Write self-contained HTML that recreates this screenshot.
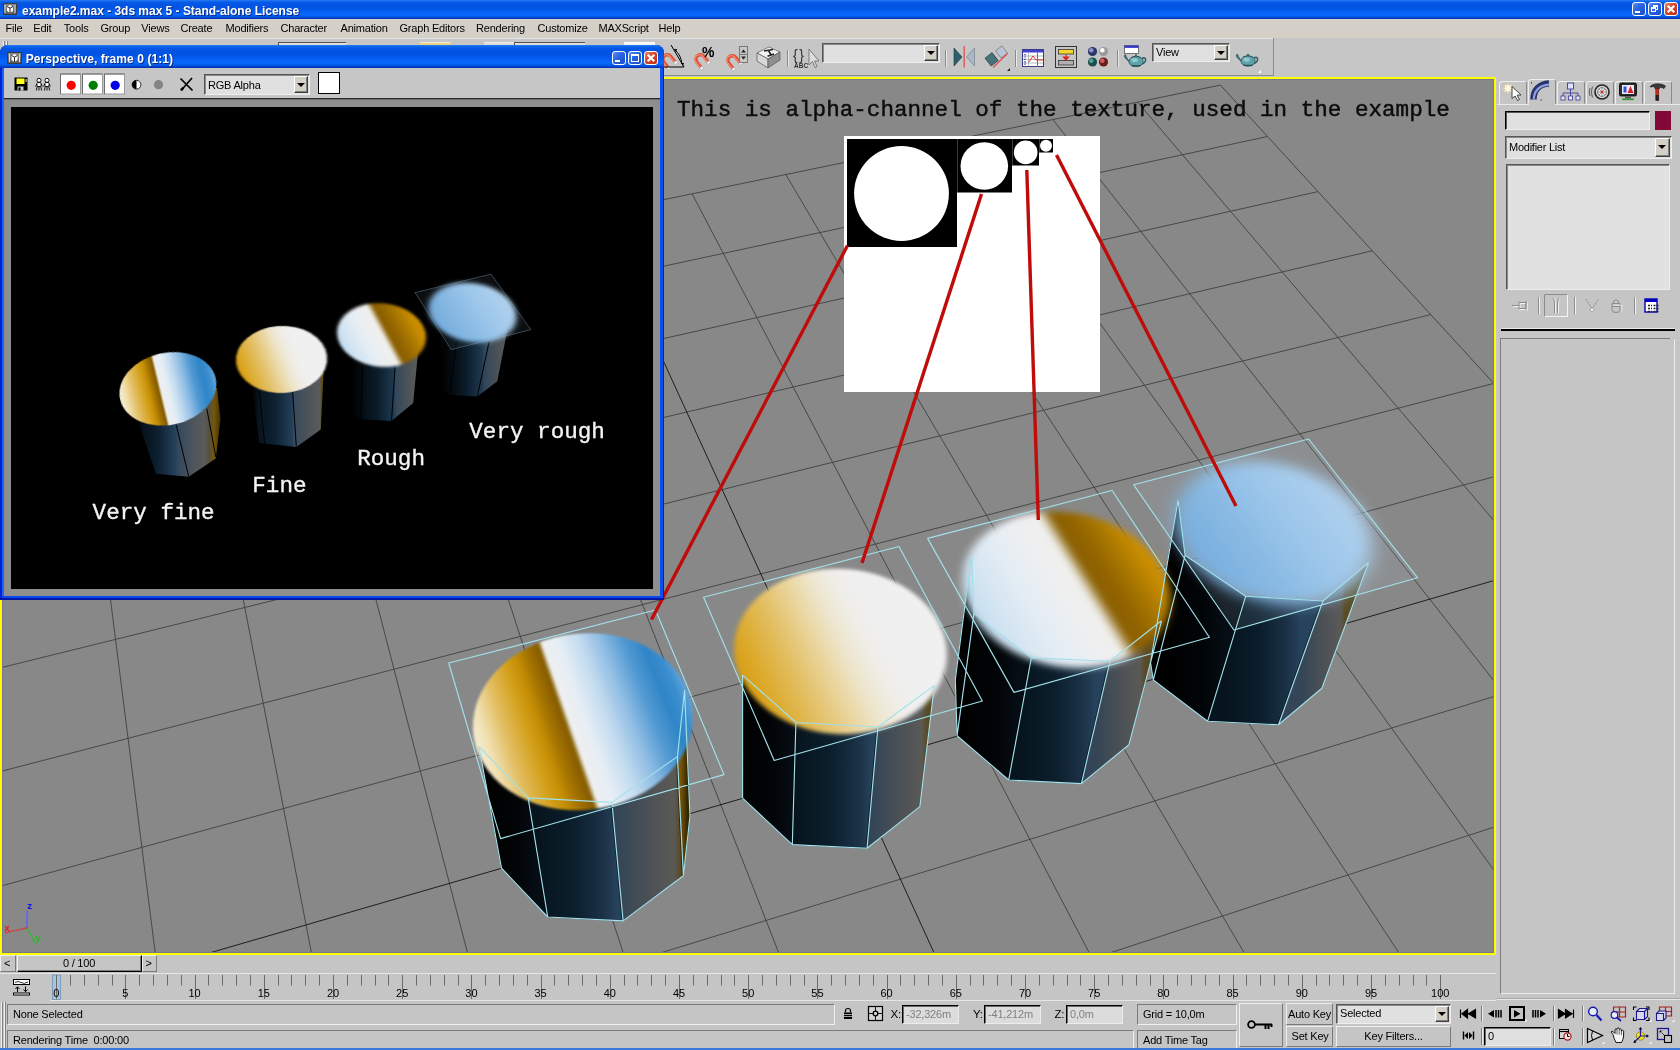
<!DOCTYPE html>
<html><head><meta charset="utf-8"><title>example2.max - 3ds max 5</title>
<style>

*{box-sizing:border-box;margin:0;padding:0}
html,body{width:1680px;height:1050px;overflow:hidden;background:#c5c5c5}
body{font-family:"Liberation Sans",sans-serif;font-size:11px;color:#000}
#root{will-change:transform;position:absolute;left:0;top:0;width:1680px;height:1050px;overflow:hidden;background:#c5c5c5}
.a{position:absolute}
.t{position:absolute;white-space:nowrap;line-height:1;letter-spacing:-0.2px}
.sunk{position:absolute;background:#e0e0e0;border:1px solid;border-color:#555 #eee #eee #555;box-shadow:inset 1px 1px 0 #8a8a8a}
.sunk2{position:absolute;background:#c5c5c5;border:1px solid;border-color:#7b7b7b #f0f0f0 #f0f0f0 #7b7b7b}
.btn{position:absolute;background:#c5c5c5;border:1px solid;border-color:#efefef #7a7a7a #7a7a7a #efefef}
.vsep{position:absolute;width:2px;border-left:1px solid #808080;border-right:1px solid #e8e8e8}
.dd{position:absolute;background:#d4d0c8;border:1px solid;border-color:#fff #404040 #404040 #fff;box-shadow:inset -1px -1px 0 #808080}
.dd:after{content:"";position:absolute;left:50%;top:50%;margin:-2px 0 0 -4px;border:4px solid transparent;border-top:4px solid #000;border-bottom:none}
.mono{font-family:"Liberation Mono",monospace;letter-spacing:0}

</style></head><body>
<div id="root">
<div class="a" style="left:0;top:0;width:1680px;height:19px;background:linear-gradient(#2a7cf0 0%,#1068ee 6%,#0456e4 16%,#0352e2 42%,#0660f4 62%,#0868fc 78%,#0558e8 88%,#0340c8 95%,#022ea8 100%)"></div>
<div class="a" style="left:3px;top:3px;width:14px;height:12px;background:linear-gradient(#8a8a8a,#5a5a5a);border:1px solid #3c3c3c"><svg class="a" style="left:0;top:0" width="12" height="10" viewBox="0 0 12 10"><path d="M3 2.5L6 1L9 2.5V7L6 9L3 7Z" fill="#fff"/><path d="M3 2.5L6 4.2L9 2.5M6 4.2V9" stroke="#222" stroke-width="1" fill="none"/><path d="M1 1v8M11 1v8" stroke="#ddd" stroke-width="1"/></svg></div>
<div class="t" id="ttl" style="left:22px;top:4.5px;font-size:12px;font-weight:bold;color:#fff;letter-spacing:-0.02px;text-shadow:1px 1px 0 #0a2a8a">example2.max - 3ds max 5 - Stand-alone License</div>
<div class="a" style="left:1632px;top:2px;width:14px;height:14px;border:1px solid #fff;border-radius:3px;background:linear-gradient(135deg,#5b8ff5 0%,#2a62e0 45%,#1c4ec8 100%)"><div class="a" style="left:2px;bottom:2px;width:5px;height:2px;background:#fff"></div></div>
<div class="a" style="left:1648px;top:2px;width:14px;height:14px;border:1px solid #fff;border-radius:3px;background:linear-gradient(135deg,#5b8ff5 0%,#2a62e0 45%,#1c4ec8 100%)"><div class="a" style="left:4px;top:2px;width:5px;height:5px;border:1px solid #fff;border-top:2px solid #fff"></div><div class="a" style="left:2px;top:4px;width:5px;height:5px;border:1px solid #fff;border-top:2px solid #fff;background:#2a62e0"></div></div>
<div class="a" style="left:1664px;top:2px;width:14px;height:14px;border:1px solid #fff;border-radius:3px;background:linear-gradient(135deg,#e8846a 0%,#d6452a 45%,#c02c14 100%)"><svg class="a" style="left:0;top:0" width="12" height="12" viewBox="0 0 11 11"><path d="M2.5 2.5L8.5 8.5M8.5 2.5L2.5 8.5" stroke="#fff" stroke-width="2"/></svg></div>
<div class="a" style="left:0;top:19px;width:1680px;height:19px;background:#d4d0c8"></div>
<div class="t mn" style="left:5.5px;top:22.5px;font-size:11px;letter-spacing:-0.2px">File</div>
<div class="t mn" style="left:33.3px;top:22.5px;font-size:11px;letter-spacing:-0.2px">Edit</div>
<div class="t mn" style="left:63.8px;top:22.5px;font-size:11px;letter-spacing:-0.2px">Tools</div>
<div class="t mn" style="left:100.5px;top:22.5px;font-size:11px;letter-spacing:-0.2px">Group</div>
<div class="t mn" style="left:141.3px;top:22.5px;font-size:11px;letter-spacing:-0.2px">Views</div>
<div class="t mn" style="left:180.5px;top:22.5px;font-size:11px;letter-spacing:-0.2px">Create</div>
<div class="t mn" style="left:225.5px;top:22.5px;font-size:11px;letter-spacing:-0.2px">Modifiers</div>
<div class="t mn" style="left:280.5px;top:22.5px;font-size:11px;letter-spacing:-0.2px">Character</div>
<div class="t mn" style="left:340.5px;top:22.5px;font-size:11px;letter-spacing:-0.2px">Animation</div>
<div class="t mn" style="left:399.5px;top:22.5px;font-size:11px;letter-spacing:-0.2px">Graph Editors</div>
<div class="t mn" style="left:476px;top:22.5px;font-size:11px;letter-spacing:-0.2px">Rendering</div>
<div class="t mn" style="left:537.5px;top:22.5px;font-size:11px;letter-spacing:-0.2px">Customize</div>
<div class="t mn" style="left:598.5px;top:22.5px;font-size:11px;letter-spacing:-0.2px">MAXScript</div>
<div class="t mn" style="left:658.5px;top:22.5px;font-size:11px;letter-spacing:-0.2px">Help</div>
<div class="a" style="left:0;top:38px;width:1680px;height:39px;background:#c6c6c6"></div>
<div class="a" style="left:0;top:38px;width:1274px;height:1px;background:#e4e4e4"></div>
<div class="a" style="left:1273px;top:38px;width:1px;height:38px;background:#8c8c8c"></div>
<div class="a" style="left:0;top:75px;width:1274px;height:1px;background:#8c8c8c"></div>
<div class="a" style="left:3px;top:41px;width:1px;height:34px;background:#f0f0f0"></div><div class="a" style="left:4px;top:41px;width:1px;height:34px;background:#808080"></div><div class="a" style="left:6px;top:41px;width:1px;height:34px;background:#f0f0f0"></div><div class="a" style="left:7px;top:41px;width:1px;height:34px;background:#808080"></div>
<div class="a" style="left:278px;top:42px;width:68px;height:4px;background:#e0e0e0;border-top:1px solid #555;border-left:1px solid #555"></div>
<div class="a" style="left:420px;top:42px;width:31px;height:4px;background:#ecd27a;border-top:1px solid #e8e8e8"></div>
<div class="a" style="left:484px;top:42px;width:30px;height:4px;background:#dcdcdc;border-top:1px solid #ececec"></div>
<div class="a" style="left:514px;top:42px;width:71px;height:4px;background:#e0e0e0;border-top:1px solid #555;border-left:1px solid #555"></div>
<div class="a" style="left:624px;top:42px;width:31px;height:4px;background:#f4f4f4;border-top:1px solid #fff"></div>
<svg class="a" style="left:640px;top:38px" width="640" height="39" viewBox="640 38 640 39"><g transform="translate(668,60) rotate(-38)"><path d="M-4.5 6V-1A4.5 4.5 0 0 1 4.5 -1V6" fill="none" stroke="#e05438" stroke-width="3.4"/><path d="M-4.5 6V-1A4.5 4.5 0 0 1 4.5 -1V6" fill="none" stroke="#f59a80" stroke-width="1" transform="translate(-0.8,-0.6)"/><rect x="-6.2" y="5.5" width="3.4" height="2.6" fill="#f4f4f4" stroke="#999" stroke-width="0.5"/><rect x="2.8" y="5.5" width="3.4" height="2.6" fill="#f4f4f4" stroke="#999" stroke-width="0.5"/></g><path d="M671 45L684 67H664" fill="none" stroke="#000" stroke-width="1"/><path d="M675 50Q681 55 682 64" fill="none" stroke="#000" stroke-width="1"/><path d="M674 49l3 0l-1 3zM683 66l-2-3l3 0z" fill="#000"/><g transform="translate(701,60) rotate(-38)"><path d="M-4.5 6V-1A4.5 4.5 0 0 1 4.5 -1V6" fill="none" stroke="#e05438" stroke-width="3.4"/><path d="M-4.5 6V-1A4.5 4.5 0 0 1 4.5 -1V6" fill="none" stroke="#f59a80" stroke-width="1" transform="translate(-0.8,-0.6)"/><rect x="-6.2" y="5.5" width="3.4" height="2.6" fill="#f4f4f4" stroke="#999" stroke-width="0.5"/><rect x="2.8" y="5.5" width="3.4" height="2.6" fill="#f4f4f4" stroke="#999" stroke-width="0.5"/></g><text x="702" y="56.5" font-family="Liberation Sans" font-size="14" font-weight="bold" fill="#000">%</text><g transform="translate(733,61) rotate(-38)"><path d="M-4.5 6V-1A4.5 4.5 0 0 1 4.5 -1V6" fill="none" stroke="#e05438" stroke-width="3.4"/><path d="M-4.5 6V-1A4.5 4.5 0 0 1 4.5 -1V6" fill="none" stroke="#f59a80" stroke-width="1" transform="translate(-0.8,-0.6)"/><rect x="-6.2" y="5.5" width="3.4" height="2.6" fill="#f4f4f4" stroke="#999" stroke-width="0.5"/><rect x="2.8" y="5.5" width="3.4" height="2.6" fill="#f4f4f4" stroke="#999" stroke-width="0.5"/></g><rect x="739.5" y="46.5" width="8" height="16" fill="#c8c8c8" stroke="#777" stroke-width="1"/><path d="M739.5 54.5h8" stroke="#777"/><path d="M741 52.5l2.5-3l2.5 3zM741 56.5l2.5 3l2.5-3z" fill="#222"/><path d="M757 53L769 47L780 52L768 59Z" fill="#f2f2f2" stroke="#555" stroke-width="0.7"/><path d="M757 53V61L768 68V59Z" fill="#d8d8d8" stroke="#555" stroke-width="0.7"/><path d="M768 59V68L780 60V52Z" fill="#8e8e8e" stroke="#555" stroke-width="0.7"/><path d="M764 51L773 49.5M768.5 50.3L771 55M767.5 56.3L774 54" stroke="#222" stroke-width="1.6"/><path d="M787.5 50V67" stroke="#8a8a8a"/><path d="M788.5 50V67" stroke="#e8e8e8"/><text x="793" y="59.5" font-family="Liberation Sans" font-size="14" letter-spacing="1.5" fill="#333">{}</text><text x="794" y="68" font-family="Liberation Sans" font-size="6.5" font-weight="bold" fill="#333">ABC</text><path d="M809 49V65L812.5 61.5L815 67.5L817 66.5L814.5 61L819 61Z" fill="#dcdcdc" stroke="#666" stroke-width="0.8"/><path d="M945.5 50V67" stroke="#8a8a8a"/><path d="M946.5 50V67" stroke="#e8e8e8"/><path d="M954 48L962 57L954 66Z" fill="#2f5f68" stroke="#16363c" stroke-width="0.6"/><path d="M974.5 48L966.5 57L974.5 66Z" fill="#a9b7c6" stroke="#6b7a8a" stroke-width="0.6"/><path d="M964.2 46V67.5" stroke="#d85a5a" stroke-width="1.4"/><g transform="translate(992,59) rotate(-38)"><rect x="-5" y="-5" width="9" height="10" fill="#46727a" stroke="#234" stroke-width="0.6"/></g><g transform="translate(1001.5,52) rotate(-38)"><rect x="-4" y="-4.5" width="8" height="9" fill="#b9c6d6" stroke="#667" stroke-width="0.6"/></g><path d="M993 67.5L1007.5 53.5" stroke="#e05050" stroke-width="1.3"/><path d="M1010 68l-3 3h3z" fill="#222"/><path d="M1010 68l-3 3h3z" fill="#fff" transform="translate(1,1)" opacity="0"/><path d="M1015.5 50V67" stroke="#8a8a8a"/><path d="M1016.5 50V67" stroke="#e8e8e8"/><rect x="1022.5" y="49.5" width="21" height="17" fill="#fff" stroke="#3a3a8a" stroke-width="1"/><rect x="1023" y="50" width="20" height="2.5" fill="#4040d0"/><path d="M1023 56h20M1023 59.5h20M1023 63h20M1028.5 52.5v14M1037.5 52.5v14" stroke="#999" stroke-width="0.7"/><path d="M1025 54v12" stroke="#33a" stroke-width="1.4" stroke-dasharray="1.2 1.2"/><path d="M1037.5 52.5v14" stroke="#2a2" stroke-width="1"/><path d="M1029 62L1033 56L1036 60h7" stroke="#d33" stroke-width="1" fill="none"/><rect x="1055.5" y="46.5" width="21" height="21" fill="#c6c6c6" stroke="#333" stroke-width="1"/><rect x="1058.5" y="49.5" width="15" height="4.5" fill="#f5d72a" stroke="#333" stroke-width="0.8"/><rect x="1058.5" y="60.5" width="15" height="4.5" fill="#b0b0b0" stroke="#333" stroke-width="0.8"/><path d="M1066 54.5v3M1063.5 57h5l-2.5 3z" stroke="#d22" stroke-width="1.2" fill="#d22"/><circle cx="1092.5" cy="51.5" r="4.6" fill="#2e3666"/><circle cx="1091.3" cy="50.2" r="2.3" fill="#8b93c8"/><circle cx="1103.5" cy="51.5" r="4.6" fill="#9a9a9a"/><circle cx="1102.3" cy="50.2" r="2.3" fill="#ffffff"/><circle cx="1092.5" cy="62" r="4.6" fill="#1c4f4a"/><circle cx="1091.3" cy="60.7" r="2.3" fill="#4fa39a"/><circle cx="1103.5" cy="62" r="4.6" fill="#6a1f1f"/><circle cx="1102.3" cy="60.7" r="2.3" fill="#d06060"/><path d="M1117.5 50V67" stroke="#8a8a8a"/><path d="M1118.5 50V67" stroke="#e8e8e8"/><rect x="1124.5" y="45.5" width="14" height="8" fill="#fff" stroke="#555" stroke-width="0.8"/><rect x="1124.5" y="45.5" width="14" height="2.4" fill="#3838c8"/><g transform="translate(1136,61.5) scale(0.95)"><path d="M-10 -2C-13 -5 -13 -7 -11 -7C-10 -4 -8 -1 -6 1Z" fill="#3f7f86" stroke="#1d3d42" stroke-width="0.6"/><path d="M6 -3C11 -6 12 0 6 3" fill="none" stroke="#2c5f66" stroke-width="1.6"/><ellipse cx="0" cy="0" rx="7.5" ry="5.5" fill="#5fa3aa" stroke="#1d3d42" stroke-width="0.7"/><ellipse cx="-1.5" cy="-1.5" rx="3.5" ry="2.2" fill="#9fd0d4" opacity="0.8"/><path d="M-5 -4.3Q0 -7 5 -4.3" fill="#4a8f96" stroke="#1d3d42" stroke-width="0.6"/><rect x="-1" y="-7.4" width="2" height="1.6" fill="#2c5f66"/><path d="M-5 4.5H5" stroke="#1d3d42" stroke-width="1"/></g><g transform="translate(1248,61) scale(0.95)"><path d="M-10 -2C-13 -5 -13 -7 -11 -7C-10 -4 -8 -1 -6 1Z" fill="#3f7f86" stroke="#1d3d42" stroke-width="0.6"/><path d="M6 -3C11 -6 12 0 6 3" fill="none" stroke="#2c5f66" stroke-width="1.6"/><ellipse cx="0" cy="0" rx="7.5" ry="5.5" fill="#5fa3aa" stroke="#1d3d42" stroke-width="0.7"/><ellipse cx="-1.5" cy="-1.5" rx="3.5" ry="2.2" fill="#9fd0d4" opacity="0.8"/><path d="M-5 -4.3Q0 -7 5 -4.3" fill="#4a8f96" stroke="#1d3d42" stroke-width="0.6"/><rect x="-1" y="-7.4" width="2" height="1.6" fill="#2c5f66"/><path d="M-5 4.5H5" stroke="#1d3d42" stroke-width="1"/></g><path d="M1261 70l-3 3h3z" fill="#fff"/></svg>
<div class="sunk" style="left:822px;top:43px;width:118px;height:20px"></div><div class="dd" style="left:924px;top:45px;width:14px;height:16px"></div>
<div class="sunk" style="left:1152px;top:43px;width:78px;height:19px"></div><div class="dd" style="left:1214px;top:45px;width:14px;height:15px"></div>
<div class="t" style="left:1156px;top:47px;font-size:11px">View</div>
<div class="a" id="vp" style="left:0px;top:77px;width:1496px;height:878px;background:#888888;overflow:hidden">
<div class="a" style="left:0px;top:-77px;width:1680px;height:1050px">
<svg class="a" style="left:0;top:0" width="1680" height="1050" viewBox="0 0 1680 1050" shape-rendering="auto"><path d="M-154.1 367.9L-168.4 2638.8M-154.1 367.9L1220.4 85.1M-37.8 344.0L92.8 2512.9M-154.5 441.9L1267.5 136.5M75.2 320.7L337.8 2394.8M-155.0 522.4L1318.0 191.6M185.1 298.1L568.2 2283.8M-155.6 610.2L1372.2 250.8M292.1 276.1L785.3 2179.2M-156.2 706.5L1430.7 314.6M396.1 254.7L990.1 2080.6M-156.9 812.4L1493.8 383.4M497.4 233.9L1183.6 1987.3M-157.6 929.5L1562.2 458.0M692.1 193.8L1540.5 1815.3M-159.3 1205.2L1717.7 627.7M785.8 174.5L1705.4 1735.9M-160.4 1369.0L1806.6 724.7M877.1 155.8L1862.1 1660.4M-161.5 1554.9L1904.4 831.4M966.1 137.5L2011.3 1588.5M-162.9 1767.4L2012.6 949.4M1052.9 119.6L2153.4 1520.0M-164.4 2012.9L2132.8 1080.5M1137.7 102.2L2289.0 1454.6M-166.2 2299.6L2267.2 1227.2M1220.4 85.1L2418.5 1392.2M-168.4 2638.8L2418.5 1392.2" stroke="#484848" stroke-width="1" fill="none"/><path d="M596.0 213.6L1366.8 1899.0M-158.4 1059.6L1636.5 539.2" stroke="#0c0c0c" stroke-width="1" fill="none" stroke-opacity="0.85"/></svg>
<svg class="a" style="left:0;top:0" width="1680" height="1050" viewBox="0 0 1680 1050"><defs><linearGradient id="f0_0" gradientUnits="userSpaceOnUse" x1="490.2" y1="807.2" x2="537.9" y2="807.2"><stop offset="0" stop-color="#000000"/><stop offset="0.6" stop-color="#020508"/><stop offset="1" stop-color="#060e15"/></linearGradient><linearGradient id="f0_1" gradientUnits="userSpaceOnUse" x1="537.9" y1="857.5" x2="617.5" y2="857.5"><stop offset="0" stop-color="#07141d"/><stop offset="0.45" stop-color="#0b1e2c"/><stop offset="0.8" stop-color="#1a3044"/><stop offset="1" stop-color="#27425c"/></linearGradient><linearGradient id="f0_2" gradientUnits="userSpaceOnUse" x1="617.5" y1="861.6" x2="680.4" y2="861.6"><stop offset="0" stop-color="#334556"/><stop offset="0.35" stop-color="#454d55"/><stop offset="0.75" stop-color="#555657"/><stop offset="0.9" stop-color="#5a5955"/><stop offset="1" stop-color="#5a4a24"/></linearGradient><linearGradient id="f0_3" gradientUnits="userSpaceOnUse" x1="680.4" y1="816.2" x2="687.3" y2="816.2"><stop offset="0" stop-color="#75560a"/><stop offset="0.5" stop-color="#5a4204"/><stop offset="1" stop-color="#352700"/></linearGradient><linearGradient id="f1_0" gradientUnits="userSpaceOnUse" x1="742.6" y1="736.6" x2="794.1" y2="736.6"><stop offset="0" stop-color="#000000"/><stop offset="0.6" stop-color="#020508"/><stop offset="1" stop-color="#060e15"/></linearGradient><linearGradient id="f1_1" gradientUnits="userSpaceOnUse" x1="794.1" y1="783.5" x2="872.5" y2="783.5"><stop offset="0" stop-color="#07141d"/><stop offset="0.45" stop-color="#0b1e2c"/><stop offset="0.8" stop-color="#1a3044"/><stop offset="1" stop-color="#27425c"/></linearGradient><linearGradient id="f1_2" gradientUnits="userSpaceOnUse" x1="872.5" y1="787.6" x2="927.1" y2="787.6"><stop offset="0" stop-color="#334556"/><stop offset="0.35" stop-color="#454d55"/><stop offset="0.75" stop-color="#555657"/><stop offset="0.9" stop-color="#5a5955"/><stop offset="1" stop-color="#5a4a24"/></linearGradient><linearGradient id="f2_0" gradientUnits="userSpaceOnUse" x1="965.5" y1="674.7" x2="1020.0" y2="674.7"><stop offset="0" stop-color="#000000"/><stop offset="0.6" stop-color="#020508"/><stop offset="1" stop-color="#060e15"/></linearGradient><linearGradient id="f2_1" gradientUnits="userSpaceOnUse" x1="1020.0" y1="719.0" x2="1095.7" y2="719.0"><stop offset="0" stop-color="#07141d"/><stop offset="0.45" stop-color="#0b1e2c"/><stop offset="0.8" stop-color="#1a3044"/><stop offset="1" stop-color="#27425c"/></linearGradient><linearGradient id="f2_2" gradientUnits="userSpaceOnUse" x1="1095.7" y1="722.4" x2="1145.2" y2="722.4"><stop offset="0" stop-color="#334556"/><stop offset="0.35" stop-color="#454d55"/><stop offset="0.75" stop-color="#555657"/><stop offset="0.9" stop-color="#5a5955"/><stop offset="1" stop-color="#5a4a24"/></linearGradient><linearGradient id="f3_0" gradientUnits="userSpaceOnUse" x1="1169.2" y1="617.6" x2="1226.7" y2="617.6"><stop offset="0" stop-color="#000000"/><stop offset="0.6" stop-color="#020508"/><stop offset="1" stop-color="#060e15"/></linearGradient><linearGradient id="f3_1" gradientUnits="userSpaceOnUse" x1="1226.7" y1="658.8" x2="1300.7" y2="658.8"><stop offset="0" stop-color="#07141d"/><stop offset="0.45" stop-color="#0b1e2c"/><stop offset="0.8" stop-color="#1a3044"/><stop offset="1" stop-color="#27425c"/></linearGradient><linearGradient id="f3_2" gradientUnits="userSpaceOnUse" x1="1300.7" y1="662.9" x2="1345.2" y2="662.9"><stop offset="0" stop-color="#334556"/><stop offset="0.35" stop-color="#454d55"/><stop offset="0.75" stop-color="#555657"/><stop offset="0.9" stop-color="#5a5955"/><stop offset="1" stop-color="#5a4a24"/></linearGradient></defs><polygon points="478.9,746.3 528.1,797.9 547.7,917.0 501.5,868.1" fill="url(#f0_0)" stroke="url(#f0_0)" stroke-width="0.7"/><polygon points="528.1,797.9 611.9,802.4 623.1,920.9 547.7,917.0" fill="url(#f0_1)" stroke="url(#f0_1)" stroke-width="0.7"/><polygon points="611.9,802.4 677.4,756.6 683.4,875.7 623.1,920.9" fill="url(#f0_2)" stroke="url(#f0_2)" stroke-width="0.7"/><polygon points="677.4,756.6 684.6,690.1 690.0,816.0 683.4,875.7" fill="url(#f0_3)" stroke="url(#f0_3)" stroke-width="0.7"/><path d="M527.3 797.9L546.9 917.0" stroke="#000" stroke-opacity="0.5" stroke-width="1.4"/><path d="M611.1 802.4L622.3 920.9" stroke="#000" stroke-opacity="0.5" stroke-width="1.4"/><path d="M676.6 756.6L682.6 875.7" stroke="#000" stroke-opacity="0.5" stroke-width="1.4"/><polygon points="742.6,675.1 795.9,722.5 792.3,844.6 742.6,798.1" fill="url(#f1_0)" stroke="url(#f1_0)" stroke-width="0.7"/><polygon points="795.9,722.5 877.9,727.0 867.0,848.2 792.3,844.6" fill="url(#f1_1)" stroke="url(#f1_1)" stroke-width="0.7"/><polygon points="877.9,727.0 934.4,685.4 919.9,806.6 867.0,848.2" fill="url(#f1_2)" stroke="url(#f1_2)" stroke-width="0.7"/><path d="M795.1 722.5L791.5 844.6" stroke="#000" stroke-opacity="0.5" stroke-width="1.4"/><path d="M877.1 727.0L866.2 848.2" stroke="#000" stroke-opacity="0.5" stroke-width="1.4"/><polygon points="971.6,554.2 973.9,613.6 957.1,735.7 955.3,679.6" fill="#000" stroke="#000" stroke-width="0.6"/><polygon points="973.9,613.6 1031.3,657.9 1008.7,780.0 957.1,735.7" fill="url(#f2_0)" stroke="url(#f2_0)" stroke-width="0.7"/><polygon points="1031.3,657.9 1110.0,661.2 1081.4,783.6 1008.7,780.0" fill="url(#f2_1)" stroke="url(#f2_1)" stroke-width="0.7"/><polygon points="1110.0,661.2 1161.5,620.8 1129.0,744.7 1081.4,783.6" fill="url(#f2_2)" stroke="url(#f2_2)" stroke-width="0.7"/><path d="M1030.5 657.9L1007.9 780.0" stroke="#000" stroke-opacity="0.5" stroke-width="1.4"/><path d="M1109.2 661.2L1080.6 783.6" stroke="#000" stroke-opacity="0.5" stroke-width="1.4"/><polygon points="1178.1,500.0 1185.1,555.2 1153.3,680.0 1150.5,662.5" fill="#000" stroke="#000" stroke-width="0.6"/><polygon points="1185.1,555.2 1245.7,596.2 1207.6,721.3 1153.3,680.0" fill="url(#f3_0)" stroke="url(#f3_0)" stroke-width="0.7"/><polygon points="1245.7,596.2 1322.9,601.0 1278.5,724.8 1207.6,721.3" fill="url(#f3_1)" stroke="url(#f3_1)" stroke-width="0.7"/><polygon points="1322.9,601.0 1368.6,562.5 1321.9,688.2 1278.5,724.8" fill="url(#f3_2)" stroke="url(#f3_2)" stroke-width="0.7"/><path d="M1244.9 596.2L1206.8 721.3" stroke="#000" stroke-opacity="0.5" stroke-width="1.4"/><path d="M1322.1 601.0L1277.7 724.8" stroke="#000" stroke-opacity="0.5" stroke-width="1.4"/></svg>
<div class="a" style="left:0;top:0;width:200px;height:200px;transform-origin:0 0;transform:matrix3d(1.1450932,-0.16161806,0,0.00016947859,0.047497281,0.52285521,0,-0.00042349724,0,0,1,0,448.7,663,0,1)"><div class="a" style="left:1.5px;top:1.5px;width:197.0px;height:197.0px;border-radius:50%;background:linear-gradient(to right,#f6efd8 0%,#f1e1b4 6%,#e2bd60 15%,#d4a01a 24.5%,#c48e04 30%,#a07000 36%,#8a5e00 40.5%,#866000 41.5%,#efefef 43.5%,#e6eef5 50.5%,#c4dcf0 60%,#8fbde4 70%,#4f98d2 80%,#2f85c7 88%,#3c8ece 94%,#66a8de 100%);background-size:200px 100%;background-position:-1.5px 0;filter:blur(0.9px)"></div></div>
<div class="a" style="left:0;top:0;width:200px;height:200px;transform-origin:0 0;transform:matrix3d(1.1072949,-0.17429404,0,0.00014493314,0.071844003,0.54031925,0,-0.0003631568,0,0,1,0,703.6,597.2,0,1)"><div class="a" style="left:1.5px;top:1.5px;width:197.0px;height:197.0px;border-radius:50%;background:linear-gradient(to right,#d79c10 0%,#dcaa2c 10%,#e2bd5e 24%,#e9d296 38%,#ede4c8 50%,#efece4 60%,#f0f0f0 70%,#f0f0f0 100%);background-size:200px 100%;background-position:-1.5px 0;filter:blur(2.2px)"></div></div>
<div class="a" style="left:0;top:0;width:200px;height:200px;transform-origin:0 0;transform:matrix3d(1.0572382,-0.18007273,0,0.00012115651,0.088005281,0.53510656,0,-0.00033924528,0,0,1,0,927.6,538.4,0,1)"><div class="a" style="left:1.5px;top:1.5px;width:197.0px;height:197.0px;border-radius:50%;background:linear-gradient(to right,#c2dcf0 0%,#d6e6f2 15%,#e6eef4 32%,#efefef 48%,#f0f0ee 57.5%,#8a5e00 63.5%,#926400 72%,#a87600 82%,#c48a00 92%,#d09000 100%);background-size:200px 100%;background-position:-1.5px 0;filter:blur(4.5px)"></div></div>
<div class="a" style="left:0;top:0;width:200px;height:200px;transform-origin:0 0;transform:matrix3d(1.0295438,-0.176987,0,0.00011848063,0.12194175,0.53246187,0,-0.00030720338,0,0,1,0,1133.7,484.8,0,1)"><div class="a" style="left:0;top:0;width:200px;height:200px;background:radial-gradient(circle at 50% 50%,rgba(150,195,235,0.55) 40%,rgba(170,190,210,0.16) 62%,rgba(170,185,200,0.10) 100%)"></div><div class="a" style="left:5.0px;top:5.0px;width:190.0px;height:190.0px;border-radius:50%;background:linear-gradient(to right,#74abdc 0%,#86b8e2 30%,#9cc6ea 60%,#b2d2ee 100%);background-size:200px 100%;background-position:-5.0px 0;filter:blur(9px)"></div></div>
<svg class="a" style="left:0;top:0" width="1680" height="1050" viewBox="0 0 1680 1050"><path d="M448.7 663.0L655.5 610.0L724.0 774.6L500.6 838.6ZM478.9 746.3L528.1 797.9L611.9 802.4L677.4 756.6L684.6 690.1M501.5 868.1L547.7 917.0L623.1 920.9L683.4 875.7M683.4 875.7L690.0 816.0M478.9 746.3L501.5 868.1M528.1 797.9L547.7 917.0M611.9 802.4L623.1 920.9M677.4 756.6L683.4 875.7M684.6 690.1L690.0 816.0M703.6 597.2L899.0 546.5L982.3 701.0L774.2 760.5ZM742.6 675.1L795.9 722.5L877.9 727.0L934.4 685.4M742.6 798.1L792.3 844.6L867.0 848.2L919.9 806.6M742.6 675.1L742.6 798.1M795.9 722.5L792.3 844.6M877.9 727.0L867.0 848.2M934.4 685.4L919.9 806.6M927.6 538.4L1112.1 490.5L1209.4 637.2L1014.0 692.4ZM971.6 554.2L973.9 613.6M971.6 554.2L955.3 679.6L957.1 735.7M973.9 613.6L1031.3 657.9L1110.0 661.2L1161.5 620.8M957.1 735.7L1008.7 780.0L1081.4 783.6L1129.0 744.7M973.9 613.6L957.1 735.7M1031.3 657.9L1008.7 780.0M1110.0 661.2L1081.4 783.6M1161.5 620.8L1129.0 744.7M1133.7 484.8L1308.6 439.0L1417.5 577.7L1233.9 630.0ZM1178.1 500.0L1185.1 555.2M1178.1 500.0L1150.5 662.5L1153.3 680.0M1185.1 555.2L1245.7 596.2L1322.9 601.0L1368.6 562.5M1153.3 680.0L1207.6 721.3L1278.5 724.8L1321.9 688.2M1185.1 555.2L1153.3 680.0M1245.7 596.2L1207.6 721.3M1322.9 601.0L1278.5 724.8M1368.6 562.5L1321.9 688.2" stroke="#a2e0ea" stroke-width="1.15" fill="none" stroke-linejoin="round"/><rect x="844" y="136" width="256" height="256" fill="#fff"/><rect x="847" y="139" width="110" height="108" fill="#000"/><rect x="957" y="139" width="55" height="53.5" fill="#000"/><rect x="1012" y="139" width="27" height="26.5" fill="#000"/><rect x="1039" y="139" width="14" height="13.5" fill="#000"/><path d="M957.5 139V192M1012.5 139V165M1039.5 139V152" stroke="#3a3a3a" stroke-width="1"/><circle cx="901.5" cy="193.5" r="47.4" fill="#fff"/><circle cx="984.3" cy="166" r="23.8" fill="#fff"/><circle cx="1025.7" cy="152.4" r="11.8" fill="#fff"/><circle cx="1046" cy="145.8" r="6" fill="#fff"/><path d="M847.5 245.5L651.5 619.5" stroke="#c00b0b" stroke-width="3.4"/><path d="M981.5 194L862 563" stroke="#c00b0b" stroke-width="3.4"/><path d="M1026.8 170L1038.3 520" stroke="#c00b0b" stroke-width="3.4"/><path d="M1056.5 155L1236 506" stroke="#c00b0b" stroke-width="3.4"/><path d="M27 928V911" stroke="#6a6ade" stroke-width="2"/><path d="M27 928L4.500 932.700" stroke="#f02828" stroke-width="1.300" stroke-dasharray="2.500 0.800"/><path d="M27 928L35 943" stroke="#30b830" stroke-width="1.400"/><text x="27.300" y="909.300" font-family="Liberation Sans" font-size="9.800" font-weight="bold" fill="#1010f0">z</text><text x="4.300" y="931.300" font-family="Liberation Sans" font-size="9.800" font-weight="bold" fill="#f01818">x</text><text x="35.300" y="941.300" font-family="Liberation Sans" font-size="9.800" font-weight="bold" fill="#18c018">y</text></svg>
<div class="t mono" id="cap" style="left:677px;top:98.9px;font-size:22.6px;color:#0c0c0c;-webkit-text-stroke:0.45px #0c0c0c">This is alpha-channel of the texture, used in the example</div>
</div>
<div class="a" style="left:0;top:0;width:1496px;height:878px;border:2px solid #ffff00;box-shadow:inset 0 0 0 1px #777788"></div>
</div>
<div class="a" id="rw" style="left:0;top:45px;width:664px;height:555px;border-radius:8px 8px 0 0;background:#0b46d8;overflow:hidden;box-shadow:inset 0 0 0 1px #0831b8">
<div class="a" style="left:0;top:0;width:664px;height:23px;background:linear-gradient(#2a7cf0 0%,#1068ee 6%,#0456e4 16%,#0352e2 42%,#0660f4 62%,#0868fc 78%,#0558e8 88%,#0340c8 95%,#022ea8 100%)"></div>
<div class="a" style="left:0;top:23px;width:664px;height:532px;background:#0a50f0"></div>
<div class="a" style="left:0;top:23px;width:2px;height:532px;background:#0420cc"></div><div class="a" style="left:2px;top:23px;width:2px;height:530px;background:#1266fa"></div>
<div class="a" style="left:662.500px;top:23px;width:1.500px;height:532px;background:#0420c4"></div>
<div class="a" style="left:0;top:553px;width:664px;height:2px;background:#0416a8"></div><div class="a" style="left:2px;top:551px;width:660px;height:2px;background:#0848f0"></div>
<div class="a" style="left:4px;top:23px;width:656px;height:528px;background:#8e8e8e"></div>
<div class="a" style="left:4px;top:23px;width:656px;height:30px;background:#c6c6c6"></div>
<div class="a" style="left:4px;top:53px;width:656px;height:1px;background:#2a2a2a"></div>
<div class="a" style="left:4px;top:54px;width:656px;height:1px;background:#6e6e6e"></div>
<div class="a" style="left:11px;top:62px;width:642px;height:482px;background:#000"></div>
</div>
<div class="a" style="left:7px;top:52px;width:15px;height:12px;background:linear-gradient(#8a8a8a,#5a5a5a);border:1px solid #3c3c3c"><svg class="a" style="left:0;top:0" width="13" height="10" viewBox="0 0 12 10"><path d="M3 2.5L6 1L9 2.5V7L6 9L3 7Z" fill="#fff"/><path d="M3 2.5L6 4.2L9 2.5M6 4.2V9" stroke="#222" stroke-width="1" fill="none"/><path d="M1 1v8M11 1v8" stroke="#ddd" stroke-width="1"/></svg></div>
<div class="t" id="rttl" style="left:25.7px;top:53px;font-size:12px;font-weight:bold;color:#fff;letter-spacing:0.08px;text-shadow:1px 1px 0 #0a2a8a">Perspective, frame 0 (1:1)</div>
<div class="a" style="left:612px;top:51px;width:14px;height:14px;border:1px solid #fff;border-radius:3px;background:linear-gradient(135deg,#5b8ff5 0%,#2a62e0 45%,#1c4ec8 100%)"><div class="a" style="left:2px;bottom:2px;width:5px;height:2px;background:#fff"></div></div>
<div class="a" style="left:628px;top:51px;width:14px;height:14px;border:1px solid #fff;border-radius:3px;background:linear-gradient(135deg,#5b8ff5 0%,#2a62e0 45%,#1c4ec8 100%)"><div class="a" style="left:2px;top:2px;width:8px;height:8px;border:1px solid #fff;border-top:2px solid #fff"></div></div>
<div class="a" style="left:644px;top:51px;width:14px;height:14px;border:1px solid #fff;border-radius:3px;background:linear-gradient(135deg,#e8846a 0%,#d6452a 45%,#c02c14 100%)"><svg class="a" style="left:0;top:0" width="12" height="12" viewBox="0 0 11 11"><path d="M2.5 2.5L8.5 8.5M8.5 2.5L2.5 8.5" stroke="#fff" stroke-width="2"/></svg></div>
<svg class="a" style="left:0;top:68px" width="360" height="31" viewBox="0 68 360 31"><rect x="14.5" y="77.5" width="13" height="13" fill="#000"/><rect x="16.5" y="78.5" width="8" height="5.5" fill="#ffff20"/><rect x="17.5" y="86.5" width="6" height="4" fill="#c6c6c6"/><rect x="18.5" y="87.5" width="2" height="3" fill="#000"/><rect x="25.5" y="79" width="1.2" height="3" fill="#c6c6c6"/><circle cx="39" cy="80.3" r="2" fill="#fff" stroke="#000" stroke-width="0.9"/><path d="M35.6 86.5L37.4 82.6H40.6L42.4 86.5M37.2 84V86.5L36.4 90.5M40.8 84V86.5L41.6 90.5M39 86.5V90.5M37.2 86.5H40.8" fill="none" stroke="#000" stroke-width="0.9"/><path d="M37.6 83.2H40.4V86H37.6Z" fill="#fff"/><circle cx="47" cy="80.3" r="2" fill="#fff" stroke="#000" stroke-width="0.9"/><path d="M43.6 86.5L45.4 82.6H48.6L50.4 86.5M45.2 84V86.5L44.4 90.5M48.8 84V86.5L49.6 90.5M47 86.5V90.5M45.2 86.5H48.8" fill="none" stroke="#000" stroke-width="0.9"/><path d="M45.6 83.2H48.4V86H45.6Z" fill="#fff"/><rect x="60.5" y="74" width="20" height="20" fill="#fff" stroke="#9a9a9a" stroke-width="1"/><path d="M60.5 94V74H80.5" fill="none" stroke="#6e6e6e" stroke-width="1"/><circle cx="71.2" cy="85.3" r="4.6" fill="#ff0000"/><rect x="82.5" y="74" width="20" height="20" fill="#fff" stroke="#9a9a9a" stroke-width="1"/><path d="M82.5 94V74H102.5" fill="none" stroke="#6e6e6e" stroke-width="1"/><circle cx="93.2" cy="85.3" r="4.6" fill="#008000"/><rect x="104.5" y="74" width="20" height="20" fill="#fff" stroke="#9a9a9a" stroke-width="1"/><path d="M104.5 94V74H124.5" fill="none" stroke="#6e6e6e" stroke-width="1"/><circle cx="115.2" cy="85.3" r="4.6" fill="#0000e8"/><circle cx="136.5" cy="84.7" r="4.4" fill="#fff"/><path d="M136.5 80.3A4.4 4.4 0 0 0 136.5 89.1Z" fill="#000"/><circle cx="136.5" cy="84.7" r="4.4" fill="none" stroke="#000" stroke-width="0.8"/><circle cx="158.5" cy="84.7" r="4.6" fill="#848484"/><path d="M180.5 78.5L192.5 90.5M192 78L181 90.5" stroke="#000" stroke-width="1.7"/><path d="M181 90.2l2.3-2.3" stroke="#000" stroke-width="2.6"/></svg>
<div class="sunk" style="left:204px;top:74px;width:106px;height:21px"></div><div class="dd" style="left:294px;top:76px;width:14px;height:17px"></div>
<div class="t" style="left:208px;top:80px;font-size:11px">RGB Alpha</div>
<div class="a" style="left:318px;top:72px;width:22px;height:22px;background:#fff;border:1px solid #000"></div>
<svg class="a" style="left:0;top:0" width="664" height="600" viewBox="0 0 664 600"><defs><linearGradient id="mb0" gradientUnits="userSpaceOnUse" x1="137" y1="0" x2="221" y2="0"><stop offset="0" stop-color="#010305"/><stop offset="0.08" stop-color="#07121b"/><stop offset="0.25" stop-color="#0c2030"/><stop offset="0.46" stop-color="#26425c"/><stop offset="0.50" stop-color="#36495c"/><stop offset="0.66" stop-color="#4c545c"/><stop offset="0.80" stop-color="#5a5a5a"/><stop offset="0.86" stop-color="#56503c"/><stop offset="0.92" stop-color="#74560a"/><stop offset="1" stop-color="#3e2e00"/></linearGradient><linearGradient id="mb1" gradientUnits="userSpaceOnUse" x1="236" y1="0" x2="324" y2="0"><stop offset="0" stop-color="#000"/><stop offset="0.18" stop-color="#000"/><stop offset="0.26" stop-color="#08141e"/><stop offset="0.45" stop-color="#0d2232"/><stop offset="0.64" stop-color="#24405a"/><stop offset="0.66" stop-color="#384a5c"/><stop offset="0.85" stop-color="#50555a"/><stop offset="0.95" stop-color="#5a5a5a"/><stop offset="0.975" stop-color="#5a4c20"/><stop offset="1" stop-color="#7a5a08"/></linearGradient><linearGradient id="mb2" gradientUnits="userSpaceOnUse" x1="338" y1="0" x2="419" y2="0"><stop offset="0" stop-color="#000"/><stop offset="0.18" stop-color="#000"/><stop offset="0.3" stop-color="#050c12"/><stop offset="0.5" stop-color="#0b1e2c"/><stop offset="0.69" stop-color="#203a52"/><stop offset="0.71" stop-color="#33475a"/><stop offset="0.88" stop-color="#4e5458"/><stop offset="0.97" stop-color="#5a5a58"/><stop offset="1" stop-color="#5a4a20"/></linearGradient><linearGradient id="mb3" gradientUnits="userSpaceOnUse" x1="426" y1="0" x2="508" y2="0"><stop offset="0" stop-color="#000"/><stop offset="0.17" stop-color="#000"/><stop offset="0.33" stop-color="#050c12"/><stop offset="0.5" stop-color="#0b1e2c"/><stop offset="0.68" stop-color="#1f3950"/><stop offset="0.72" stop-color="#33475a"/><stop offset="0.88" stop-color="#4c5258"/><stop offset="1" stop-color="#5a5a5a"/></linearGradient></defs><polygon points="137,419 156.1,473.8 188.7,476.8 215.8,458.4 220.5,419 217,388 168,382" fill="url(#mb0)"/><path d="M176 424L188.7 476.5" stroke="#000" stroke-width="1"/><path d="M206.8 408.6L215.8 457" stroke="#000" stroke-width="1"/><polygon points="252,388 259.3,443 296.4,447 320.8,429.4 323.5,372 282,355" fill="url(#mb1)"/><path d="M259.2 390.5L264.7 443.9" stroke="#000" stroke-width="1"/><path d="M292.7 392.3L296.3 446.6" stroke="#000" stroke-width="1"/><polygon points="352.6,352 353.5,412.9 360.7,419.2 391.5,421 413.2,403 418.6,346 382,330" fill="url(#mb2)"/><path d="M362.5 365L360.7 419.2" stroke="#000" stroke-width="1"/><path d="M395.1 366.8L391.5 420.7" stroke="#000" stroke-width="1"/><polygon points="440.3,322 440.3,386.7 448.5,394.8 477.4,396.6 497.3,381.2 507.3,330 473,308" fill="url(#mb3)"/><path d="M456.6 341.4L449.4 394.8" stroke="#000" stroke-width="1"/><path d="M489.2 341.4L477.4 396.1" stroke="#000" stroke-width="1"/><path d="M415 292.6L491 274.1L530.8 329.7L451.2 349.6Z" fill="rgba(120,150,180,0.10)" stroke="rgba(150,180,205,0.35)" stroke-width="1"/></svg>
<div class="a" style="left:0;top:0;width:100px;height:100px;transform-origin:0 0;transform:matrix(0.95320,-0.21924,0.16862,0.70259,111.809,364.632)"><div class="a" style="left:0;top:0;width:100px;height:100px;border-radius:50%;background:linear-gradient(to right,#f6efd8 0%,#f1e1b4 6%,#e2bd60 16%,#d4a01a 26%,#c48e04 31%,#a07000 36%,#8a5e00 39.5%,#866000 40.5%,#efefef 43%,#e6eef5 50%,#c4dcf0 58%,#8fbde4 68%,#4f98d2 78%,#2f85c7 87%,#3c8ece 94%,#66a8de 100%);filter:blur(0.6px)"></div></div>
<div class="a" style="left:0;top:0;width:100px;height:100px;transform-origin:0 0;transform:matrix(0.87520,-0.20130,0.25646,0.64114,225.017,337.408)"><div class="a" style="left:0;top:0;width:100px;height:100px;border-radius:50%;background:linear-gradient(to right,#d79c10 0%,#dcaa2c 10%,#e2bd5e 24%,#e9d296 38%,#ede4c8 50%,#efece4 60%,#f0f0f0 70%,#f0f0f0 100%);filter:blur(1.0px)"></div></div>
<div class="a" style="left:0;top:0;width:100px;height:100px;transform-origin:0 0;transform:matrix(0.82875,-0.19061,0.32992,0.61096,323.567,313.983)"><div class="a" style="left:0;top:0;width:100px;height:100px;border-radius:50%;background:linear-gradient(to right,#c2dcf0 0%,#d6e6f2 15%,#e6eef4 30%,#efefef 45%,#f0f0ee 51%,#8a5e00 58%,#926400 66%,#a87600 78%,#c48a00 90%,#d09000 100%);filter:blur(2.0px)"></div></div>
<div class="a" style="left:0;top:0;width:100px;height:100px;transform-origin:0 0;transform:matrix(0.79085,-0.18190,0.38594,0.57176,413.660,293.007)"><div class="a" style="left:0;top:0;width:100px;height:100px;border-radius:50%;background:linear-gradient(to right,#74abdc 0%,#86b8e2 30%,#9cc6ea 60%,#b2d2ee 100%);filter:blur(3.6px)"></div></div>
<div class="t mono lbl" style="left:92.6px;top:501.7px;font-size:22.6px;color:#f4f4f4;-webkit-text-stroke:0.35px #f4f4f4">Very fine</div>
<div class="t mono lbl" style="left:252.3px;top:475.4px;font-size:22.6px;color:#f4f4f4;-webkit-text-stroke:0.35px #f4f4f4">Fine</div>
<div class="t mono lbl" style="left:357.2px;top:447.9px;font-size:22.6px;color:#f4f4f4;-webkit-text-stroke:0.35px #f4f4f4">Rough</div>
<div class="t mono lbl" style="left:469.3px;top:421.1px;font-size:22.6px;color:#f4f4f4;-webkit-text-stroke:0.35px #f4f4f4">Very rough</div>
<div class="a" style="left:1496px;top:77px;width:184px;height:925px;background:#c5c5c5"></div>
<div class="a" style="left:1499px;top:80.5px;width:28px;height:23.5px;background:#c5c5c5;border:1px solid;border-color:#eee #8a8a8a transparent #eee;border-radius:3px 3px 0 0"></div>
<div class="a" style="left:1528px;top:79px;width:28px;height:25px;background:#c5c5c5;border:1px solid;border-color:#eee #8a8a8a transparent #eee;border-radius:3px 3px 0 0"></div>
<div class="a" style="left:1557px;top:80.5px;width:28px;height:23.5px;background:#c5c5c5;border:1px solid;border-color:#eee #8a8a8a transparent #eee;border-radius:3px 3px 0 0"></div>
<div class="a" style="left:1586px;top:80.5px;width:28px;height:23.5px;background:#c5c5c5;border:1px solid;border-color:#eee #8a8a8a transparent #eee;border-radius:3px 3px 0 0"></div>
<div class="a" style="left:1615px;top:80.5px;width:28px;height:23.5px;background:#c5c5c5;border:1px solid;border-color:#eee #8a8a8a transparent #eee;border-radius:3px 3px 0 0"></div>
<div class="a" style="left:1644px;top:80.5px;width:28px;height:23.5px;background:#c5c5c5;border:1px solid;border-color:#eee #8a8a8a transparent #eee;border-radius:3px 3px 0 0"></div>
<div class="a" style="left:1497px;top:104px;width:183px;height:1px;background:#eaeaea"></div>
<div class="a" style="left:1529px;top:104px;width:26px;height:1px;background:#c5c5c5"></div>
<svg class="a" style="left:1496px;top:78px" width="184" height="30" viewBox="1496 79.5 184 30"><path d="M1508 84l1 3.2l3.2-1.6l-1.6 3.2l3.2 1l-3.2 1l1.6 3.2l-3.2-1.6l-1 3.2l-1-3.2l-3.2 1.6l1.6-3.2l-3.2-1l3.2-1l-1.6-3.2l3.2 1.6z" fill="#fffbe0" stroke="#d8c890" stroke-width="0.4"/><path d="M1512 88V100L1515 97.5L1517.5 102L1519.5 101L1517 96.7L1521 96.5Z" fill="#fff" stroke="#333" stroke-width="0.9"/><path d="M1533.5 101C1533.5 92 1539 85.5 1549 85" fill="none" stroke="#26356e" stroke-width="6.5"/><path d="M1533.8 101C1533.8 92.5 1539.5 86.8 1549 86.2" fill="none" stroke="#8fa0dc" stroke-width="2.2"/><path d="M1531.5 83.5V101.5H1550" fill="none" stroke="#222" stroke-width="0.8" stroke-dasharray="1.5 12"/><rect x="1567.5" y="84.5" width="6" height="6" fill="#dfe3ff" stroke="#4a4a9a" stroke-width="1"/><path d="M1570.5 90.5V93.5M1563 98V94.5H1578V98M1570.5 93.5V98" fill="none" stroke="#4a4a9a" stroke-width="1"/><rect x="1561" y="97.5" width="4" height="4" fill="#e8e8ff" stroke="#4a4a9a" stroke-width="0.9"/><rect x="1568.5" y="97.5" width="4" height="4" fill="#e8e8ff" stroke="#4a4a9a" stroke-width="0.9"/><rect x="1576" y="97.5" width="4" height="4" fill="#e8e8ff" stroke="#4a4a9a" stroke-width="0.9"/><circle cx="1602" cy="93.5" r="7" fill="#d8d8d8" stroke="#222" stroke-width="1.6"/><circle cx="1602" cy="93.5" r="4.4" fill="#eee" stroke="#555" stroke-width="0.7"/><path d="M1602 89v9M1597.5 93.5h9M1599 90.5l6 6M1605 90.5l-6 6" stroke="#666" stroke-width="0.6"/><circle cx="1602" cy="93.5" r="1.3" fill="#e02020"/><path d="M1592.5 88Q1590 93.5 1592.5 99M1590 89.5Q1588.5 93.5 1590 97.5" fill="none" stroke="#555" stroke-width="0.9"/><rect x="1619.500" y="84.5" width="17" height="13" rx="1.5" fill="#2a2a2a" stroke="#000" stroke-width="0.8"/><rect x="1622" y="86.5" width="12" height="9" fill="#e8ecff"/><rect x="1623.500" y="88" width="3" height="6" fill="#3a50d0"/><path d="M1627.5 94.5L1630.5 87.500L1633.500 94.500Z" fill="#e02020"/><rect x="1625" y="98" width="6" height="2" fill="#555"/><rect x="1622" y="100" width="12" height="1.6" fill="#2a9a2a"/><path d="M1650 88.500C1652 85 1660 84 1665.500 87.500L1664 90L1660.500 88.500L1659 90.500H1655.500L1654 88Z" fill="#3a3a3a" stroke="#111" stroke-width="0.6"/><rect x="1655.800" y="90" width="3" height="12" fill="#c82a1a" stroke="#5a1208" stroke-width="0.5"/><rect x="1655.800" y="96.500" width="3" height="5.500" fill="#222"/></svg>
<div class="sunk" style="left:1505px;top:111px;width:145px;height:18.500px;border-color:#000 #eee #eee #000;box-shadow:inset 1px 1px 0 #555"></div>
<div class="a" style="left:1655px;top:111px;width:16px;height:18.500px;background:#820839"></div>
<div class="sunk" style="left:1505px;top:136px;width:166.500px;height:22.500px"></div><div class="dd" style="left:1654.500px;top:138px;width:15px;height:18.500px"></div>
<div class="t" style="left:1509px;top:142px;font-size:11px;letter-spacing:-0.25px">Modifier List</div>
<div class="sunk" style="left:1505.500px;top:163.500px;width:164px;height:126px;background:#e1e1e1"></div>
<svg class="a" style="left:1500px;top:290px" width="180" height="32" viewBox="1500 290 180 32"><path d="M1512 305.500H1519M1519 301.500V309.500M1519.500 302.500H1526V308.500H1519.500M1526 301V310" fill="none" stroke="#f4f4f4" stroke-width="1" transform="translate(1,1)"/><path d="M1512 305.500H1519M1519 301.500V309.500M1519.500 302.500H1526V308.500H1519.500M1526 301V310" fill="none" stroke="#8c8c8c" stroke-width="1"/><path d="M1538.5 297V314" stroke="#8c8c8c"/><path d="M1539.5 297V314" stroke="#f4f4f4"/><path d="M1574.5 297V314" stroke="#8c8c8c"/><path d="M1575.5 297V314" stroke="#f4f4f4"/><path d="M1634.5 297V314" stroke="#8c8c8c"/><path d="M1635.5 297V314" stroke="#f4f4f4"/><rect x="1544.500" y="294.500" width="23" height="22" fill="none" stroke="#f4f4f4"/><path d="M1544.500 316.500V294.500H1567.500" fill="none" stroke="#8c8c8c"/><path d="M1553 298C1554 300 1554.500 302 1554.500 304V313M1559 298C1558 300 1557.500 302 1557.500 304V313" fill="none" stroke="#f4f4f4" stroke-width="1" transform="translate(1,0)"/><path d="M1553 298C1554 300 1554.500 302 1554.500 304V313M1559 298C1558 300 1557.500 302 1557.500 304V313" fill="none" stroke="#8c8c8c" stroke-width="1"/><path d="M1586 299L1592 309L1598.500 299" fill="none" stroke="#8c8c8c" stroke-width="1" stroke-dasharray="2 1"/><path d="M1592 307.500l2.200 2.200l-2.200 2.200l-2.200-2.200z" fill="#f4f4f4" stroke="#8c8c8c" stroke-width="0.8"/><path d="M1612 303.500H1620V310Q1620 312.500 1616 312.500Q1612 312.500 1612 310Z" fill="none" stroke="#8c8c8c" stroke-width="1"/><path d="M1613.500 303.500V301Q1616 298.500 1618.500 301V303.500M1612 306.500H1620" fill="none" stroke="#8c8c8c" stroke-width="1"/><path d="M1613 304.500H1621V311" fill="none" stroke="#f4f4f4" stroke-width="0.8" opacity="0.8" transform="translate(0.800,0.800)"/><rect x="1645" y="299" width="12" height="13" fill="#fff" stroke="#0000b0" stroke-width="1.400"/><rect x="1645" y="299" width="12" height="3" fill="#0000c8"/><path d="M1648 305.500h4M1653.500 305.500h6M1648 308.500h4M1653.500 308.500h6M1648 311.500h4M1653.500 311.500h6" stroke="#222" stroke-width="1.500" stroke-dasharray="2 1"/></svg>
<div class="a" style="left:1501px;top:327.500px;width:174px;height:1px;background:#e8e8e8"></div><div class="a" style="left:1501px;top:328.500px;width:174px;height:2px;background:#000"></div>
<div class="a" style="left:1500px;top:338px;width:175px;height:656px;border-left:1px solid #7c7c7c;border-top:1px solid #7c7c7c;border-right:1px solid #ececec;border-bottom:1px solid #ececec"></div>
<div class="a" style="left:1670px;top:338px;width:4px;height:1px;background:#c5c5c5"></div>
<div class="a" style="left:0;top:955px;width:1496px;height:95px;background:#c5c5c5"></div>
<div class="a" style="left:1496px;top:1000px;width:184px;height:50px;background:#c5c5c5"></div>
<div class="btn" style="left:0;top:955px;width:16px;height:17px"></div><div class="t" style="left:4px;top:958px;font-size:11px">&lt;</div>
<div class="a" style="left:17px;top:955px;width:125px;height:17px;background:#c5c5c5;border:1px solid;border-color:#efefef #000 #000 #efefef;box-shadow:inset -1px -1px 0 #7a7a7a"></div>
<div class="t" id="sl" style="left:17px;top:958px;width:124px;text-align:center;font-size:11px">0 / 100</div>
<div class="btn" style="left:141.500px;top:955px;width:15.500px;height:17px"></div><div class="t" style="left:145.500px;top:958px;font-size:11px">&gt;</div>
<div class="a" style="left:0;top:972.500px;width:1496px;height:1px;background:#e6e6e6"></div>
<div class="a" style="left:50px;top:999.500px;width:1446px;height:1px;background:#e6e6e6"></div>
<svg class="a" style="left:0;top:972px" width="1500" height="30" viewBox="0 972 1500 30"><rect x="52.500" y="975" width="8" height="24.500" fill="#a9c4de" stroke="#6f8fb0" stroke-width="0.8"/><path d="M70.5 975V985.500M84.5 975V985.500M98.5 975V985.500M112.5 975V985.500M139.5 975V985.500M153.5 975V985.500M167.5 975V985.500M181.5 975V985.500M208.5 975V985.500M222.5 975V985.500M236.5 975V985.500M250.5 975V985.500M278.5 975V985.500M291.5 975V985.500M305.5 975V985.500M319.5 975V985.500M347.5 975V985.500M361.5 975V985.500M375.5 975V985.500M388.5 975V985.500M416.5 975V985.500M430.5 975V985.500M444.5 975V985.500M458.5 975V985.500M485.5 975V985.500M499.5 975V985.500M513.5 975V985.500M527.5 975V985.500M554.5 975V985.500M568.5 975V985.500M582.5 975V985.500M596.5 975V985.500M624.5 975V985.500M637.5 975V985.500M651.5 975V985.500M665.5 975V985.500M693.5 975V985.500M707.5 975V985.500M721.5 975V985.500M734.5 975V985.500M762.5 975V985.500M776.5 975V985.500M790.5 975V985.500M804.5 975V985.500M831.5 975V985.500M845.5 975V985.500M859.5 975V985.500M873.5 975V985.500M900.5 975V985.500M914.5 975V985.500M928.5 975V985.500M942.5 975V985.500M970.5 975V985.500M983.5 975V985.500M997.5 975V985.500M1011.5 975V985.500M1039.5 975V985.500M1053.5 975V985.500M1067.5 975V985.500M1080.5 975V985.500M1108.5 975V985.500M1122.5 975V985.500M1136.5 975V985.500M1150.5 975V985.500M1177.5 975V985.500M1191.5 975V985.500M1205.5 975V985.500M1219.5 975V985.500M1246.5 975V985.500M1260.5 975V985.500M1274.5 975V985.500M1288.5 975V985.500M1316.5 975V985.500M1329.5 975V985.500M1343.5 975V985.500M1357.5 975V985.500M1385.5 975V985.500M1399.5 975V985.500M1413.5 975V985.500M1426.5 975V985.500" stroke="#6a6a6a" stroke-width="1"/><path d="M56.5 975V999M125.5 975V999M195.5 975V999M264.5 975V999M333.5 975V999M402.5 975V999M471.5 975V999M541.5 975V999M610.5 975V999M679.5 975V999M748.5 975V999M817.5 975V999M887.5 975V999M956.5 975V999M1025.5 975V999M1094.5 975V999M1163.5 975V999M1233.5 975V999M1302.5 975V999M1371.5 975V999M1440.5 975V999" stroke="#6a6a6a" stroke-width="1"/><text x="56.2" y="997" text-anchor="middle" font-family="Liberation Sans" font-size="11" fill="#000">0</text><text x="125.4" y="997" text-anchor="middle" font-family="Liberation Sans" font-size="11" fill="#000">5</text><text x="194.6" y="997" text-anchor="middle" font-family="Liberation Sans" font-size="11" fill="#000">10</text><text x="263.8" y="997" text-anchor="middle" font-family="Liberation Sans" font-size="11" fill="#000">15</text><text x="333.0" y="997" text-anchor="middle" font-family="Liberation Sans" font-size="11" fill="#000">20</text><text x="402.2" y="997" text-anchor="middle" font-family="Liberation Sans" font-size="11" fill="#000">25</text><text x="471.4" y="997" text-anchor="middle" font-family="Liberation Sans" font-size="11" fill="#000">30</text><text x="540.6" y="997" text-anchor="middle" font-family="Liberation Sans" font-size="11" fill="#000">35</text><text x="609.8" y="997" text-anchor="middle" font-family="Liberation Sans" font-size="11" fill="#000">40</text><text x="679.0" y="997" text-anchor="middle" font-family="Liberation Sans" font-size="11" fill="#000">45</text><text x="748.2" y="997" text-anchor="middle" font-family="Liberation Sans" font-size="11" fill="#000">50</text><text x="817.4" y="997" text-anchor="middle" font-family="Liberation Sans" font-size="11" fill="#000">55</text><text x="886.6" y="997" text-anchor="middle" font-family="Liberation Sans" font-size="11" fill="#000">60</text><text x="955.8" y="997" text-anchor="middle" font-family="Liberation Sans" font-size="11" fill="#000">65</text><text x="1025.0" y="997" text-anchor="middle" font-family="Liberation Sans" font-size="11" fill="#000">70</text><text x="1094.2" y="997" text-anchor="middle" font-family="Liberation Sans" font-size="11" fill="#000">75</text><text x="1163.4" y="997" text-anchor="middle" font-family="Liberation Sans" font-size="11" fill="#000">80</text><text x="1232.6" y="997" text-anchor="middle" font-family="Liberation Sans" font-size="11" fill="#000">85</text><text x="1301.8" y="997" text-anchor="middle" font-family="Liberation Sans" font-size="11" fill="#000">90</text><text x="1371.0" y="997" text-anchor="middle" font-family="Liberation Sans" font-size="11" fill="#000">95</text><text x="1440.2" y="997" text-anchor="middle" font-family="Liberation Sans" font-size="11" fill="#000">100</text><rect x="13.500" y="979.500" width="16" height="5" fill="#fff" stroke="#000" stroke-width="1"/><path d="M15 982.500q3-2 6 0t7-0.500" fill="none" stroke="#000" stroke-width="0.8"/><path d="M17.500 992V987M15.500 989l2-2.200l2 2.200M25.500 986.500V991.500M23.500 989.500l2 2.200l2-2.200" fill="none" stroke="#000" stroke-width="1"/><rect x="13.500" y="993" width="16" height="2" fill="#fff" stroke="#000" stroke-width="1"/></svg>
<div class="a" style="left:1px;top:1002px;width:1px;height:46px;background:#f0f0f0"></div><div class="a" style="left:2px;top:1002px;width:1px;height:46px;background:#808080"></div><div class="a" style="left:4px;top:1002px;width:1px;height:46px;background:#f0f0f0"></div><div class="a" style="left:5px;top:1002px;width:1px;height:46px;background:#808080"></div>
<div class="sunk2" style="left:7px;top:1004px;width:828px;height:21px"></div><div class="t" style="left:13px;top:1009px;font-size:11px">None Selected</div>
<div class="sunk2" style="left:7px;top:1029.500px;width:1127px;height:21px"></div><div class="t" style="left:13px;top:1034.500px;font-size:11px">Rendering Time&nbsp;&nbsp;0:00:00</div>
<svg class="a" style="left:838px;top:1002px" width="60" height="24" viewBox="838 1002 60 24"><path d="M845.500 1012.500V1010.500Q845.500 1008.500 848 1008.500Q850.500 1008.500 850.500 1010.500V1012.500" fill="none" stroke="#000" stroke-width="1.200"/><rect x="844" y="1012.500" width="8" height="6.500" fill="#000"/><path d="M844 1014.500h8M844 1016.500h8" stroke="#c5c5c5" stroke-width="0.800"/><rect x="868.500" y="1006.500" width="14" height="14" fill="#d4d4d4" stroke="#000" stroke-width="1.200"/><path d="M875.500 1007V1020M869 1013.500H882" stroke="#000" stroke-width="0.900"/><circle cx="875.500" cy="1013.500" r="2.300" fill="#d4d4d4" stroke="#000" stroke-width="1.300"/></svg>
<div class="t" style="left:890.5px;top:1009px;font-size:11.500px">X:</div>
<div class="a" style="left:901.5px;top:1004.500px;width:57px;height:19.500px;background:#dcdcdc;border:1px solid;border-color:#000 #ececec #ececec #000;box-shadow:inset 1px 1px 0 #6a6a6a"></div>
<div class="t" style="left:906.0px;top:1009px;font-size:11px;color:#808080">-32,326m</div>
<div class="t" style="left:973px;top:1009px;font-size:11.500px">Y:</div>
<div class="a" style="left:983.5px;top:1004.500px;width:57px;height:19.500px;background:#dcdcdc;border:1px solid;border-color:#000 #ececec #ececec #000;box-shadow:inset 1px 1px 0 #6a6a6a"></div>
<div class="t" style="left:988.0px;top:1009px;font-size:11px;color:#808080">-41,212m</div>
<div class="t" style="left:1054.5px;top:1009px;font-size:11.500px">Z:</div>
<div class="a" style="left:1065.5px;top:1004.500px;width:57px;height:19.500px;background:#dcdcdc;border:1px solid;border-color:#000 #ececec #ececec #000;box-shadow:inset 1px 1px 0 #6a6a6a"></div>
<div class="t" style="left:1070.0px;top:1009px;font-size:11px;color:#808080">0,0m</div>
<div class="sunk2" style="left:1137px;top:1004px;width:99.500px;height:21px"></div><div class="t" style="left:1143px;top:1009px;font-size:11px">Grid = 10,0m</div>
<div class="sunk2" style="left:1137px;top:1029.500px;width:99.500px;height:21px"></div><div class="t" style="left:1143px;top:1034.500px;font-size:11px">Add Time Tag</div>
<div class="btn" style="left:1239px;top:1003px;width:43.500px;height:44px"></div>
<svg class="a" style="left:1239px;top:1003px" width="44" height="44" viewBox="1239 1003 44 44"><circle cx="1251.500" cy="1024.500" r="3.400" fill="none" stroke="#000" stroke-width="1.800"/><path d="M1255 1024.500H1272M1265.500 1024.500V1029M1268.500 1024.500V1029M1271.500 1024V1027" stroke="#000" stroke-width="2"/></svg>
<div class="btn" style="left:1285.500px;top:1003px;width:47px;height:21.500px"></div><div class="t" style="left:1288px;top:1008.500px;font-size:11px">Auto Key</div>
<div class="btn" style="left:1285.500px;top:1026px;width:47px;height:21px"></div><div class="t" style="left:1291.500px;top:1031px;font-size:11px">Set Key</div>
<div class="sunk" style="left:1336px;top:1003.500px;width:114.500px;height:20.500px"></div><div class="dd" style="left:1434.500px;top:1005.500px;width:14px;height:16.500px"></div><div class="t" style="left:1340px;top:1008px;font-size:11px">Selected</div>
<div class="btn" style="left:1336px;top:1026px;width:115px;height:21px"></div><div class="t" style="left:1336px;top:1031px;width:115px;text-align:center;font-size:11px">Key Filters...</div>
<div class="a" style="left:1497px;top:999px;width:183px;height:1px;background:#e8e8e8"></div><div class="a" style="left:1497px;top:998px;width:183px;height:1px;background:#a8a8a8"></div>
<svg class="a" style="left:1455px;top:1002px" width="225" height="46" viewBox="1455 1002 225 46"><path d="M1460.500 1009.500V1018M1467.500 1009.500V1018L1462 1013.700ZM1475.500 1009.500V1018L1468.500 1013.700Z" fill="#000" stroke="#000" stroke-width="1.200"/><path d="M1481.5 1006V1021" stroke="#7a7a7a"/><path d="M1482.5 1006V1021" stroke="#ececec"/><path d="M1553.5 1006V1021" stroke="#7a7a7a"/><path d="M1554.5 1006V1021" stroke="#ececec"/><path d="M1582.5 1006V1021" stroke="#7a7a7a"/><path d="M1583.5 1006V1021" stroke="#ececec"/><path d="M1481.5 1028V1045" stroke="#7a7a7a"/><path d="M1482.5 1028V1045" stroke="#ececec"/><path d="M1553.5 1028V1045" stroke="#7a7a7a"/><path d="M1554.5 1028V1045" stroke="#ececec"/><path d="M1582.5 1028V1045" stroke="#7a7a7a"/><path d="M1583.5 1028V1045" stroke="#ececec"/><path d="M1494 1010V1017.500L1488 1013.700Z" fill="#000"/><path d="M1496 1010V1017.500M1498.500 1010V1017.500M1501 1010V1017.500" stroke="#000" stroke-width="1.500"/><rect x="1510" y="1007" width="14" height="13" fill="#c5c5c5" stroke="#000" stroke-width="2"/><path d="M1514 1010V1017.500L1520.500 1013.700Z" fill="#000"/><path d="M1527 1019l-2.500 2.500h2.500z" fill="#fff"/><path d="M1533 1010V1017.500M1535.500 1010V1017.500M1538 1010V1017.500" stroke="#000" stroke-width="1.500"/><path d="M1540 1010V1017.500L1546 1013.700Z" fill="#000"/><path d="M1558.500 1009.500V1018L1565 1013.700ZM1565.500 1009.500V1018L1572 1013.700ZM1573.500 1009.500V1018" fill="#000" stroke="#000" stroke-width="1.200"/><path d="M1463.500 1031.500V1039.500M1473.500 1031.500V1039.500" stroke="#000" stroke-width="1.400"/><path d="M1464.500 1035.500l3.500-3.500v7zM1472.500 1035.500l-3.500-3.500v7z" fill="#000"/><circle cx="1593" cy="1011.500" r="4.300" fill="#e8eef8" stroke="#1a1aa8" stroke-width="1.400"/><path d="M1596.500 1015l5 5.500" stroke="#1a1ab8" stroke-width="2.200"/><path d="M1613.500 1007h12v10h-12zM1619.500 1007v10M1613.500 1012h12" fill="none" stroke="#a82020" stroke-width="1.200"/><circle cx="1614.500" cy="1015" r="3.300" fill="#e8eef8" stroke="#1a1aa8" stroke-width="1.200"/><path d="M1617 1017.500l4 3.500" stroke="#1a1ab8" stroke-width="1.800"/><path d="M1636.500 1011.500h8v8h-8zM1636.500 1011.500l3-3h8l-3 3M1647.500 1008.500v8l-3 3" fill="#d8d8e8" stroke="#1a1a90" stroke-width="1.100"/><path d="M1633.500 1010v-3h3M1646 1007h3v3M1633.500 1017.500v3h3M1649 1017.500v3h-3" fill="none" stroke="#000" stroke-width="1.100"/><path d="M1651.500 1019.500l-2.500 2.500h2.500z" fill="#fff"/><path d="M1659.500 1007h12v9h-12zM1665.500 1007v9M1659.500 1011.500h12" fill="none" stroke="#a82020" stroke-width="1.200"/><path d="M1656.500 1013.500h7v7h-7zM1656.500 1013.500l2.500-2.500h7v7l-2.500 2.500" fill="#d8d8e8" stroke="#1a1a90" stroke-width="1.100"/><path d="M1674.500 1019.500l-2.500 2.500h2.500z" fill="#fff"/><rect x="1559.500" y="1029.500" width="9" height="9" fill="#d8d8d8" stroke="#000" stroke-width="1"/><path d="M1559.500 1031.500h9" stroke="#000" stroke-width="1.200"/><circle cx="1567.500" cy="1036.500" r="3.600" fill="#e8e8e8" stroke="#b01818" stroke-width="1.200"/><path d="M1567.500 1034v2.500h2" fill="none" stroke="#000" stroke-width="1"/><path d="M1587.500 1028.500L1602.500 1035.500L1587.500 1042.500Z" fill="#d4d4d4" stroke="#000" stroke-width="1.200"/><path d="M1592.500 1031Q1590.500 1035.500 1592.500 1040" fill="none" stroke="#000" stroke-width="1"/><path d="M1604.500 1041.500l-2.500 2.500h2.500z" fill="#fff"/><path d="M1613 1034.500L1611 1032Q1612 1030.500 1613.500 1032L1615 1033.500V1029.500Q1616 1028 1617 1029.500V1028.500Q1618 1027 1619.200 1028.500V1029.500Q1620.200 1028 1621.400 1029.500V1031Q1622.500 1029.500 1623.700 1031L1623.500 1037Q1623 1040 1621.500 1042.500H1616Q1614 1039 1613 1034.500Z" fill="#f4f4f4" stroke="#000" stroke-width="0.900"/><path d="M1617 1030v4.500M1619.200 1029.500v5M1621.400 1030.500v4.500" stroke="#000" stroke-width="0.600"/><circle cx="1640.500" cy="1036" r="4.200" fill="#f4e020" stroke="#8a7a00" stroke-width="0.800"/><path d="M1640.500 1036V1028.500M1640.500 1036L1647.500 1036M1640.500 1036L1634.500 1042" stroke="#1a1aa8" stroke-width="1.200"/><path d="M1640.500 1027l-1.800 2.500h3.600zM1649 1036l-2.500-1.800v3.600zM1633.500 1043l0.600-3l2.400 2.400z" fill="#000"/><path d="M1651.500 1041.500l-2.500 2.500h2.500z" fill="#fff"/><rect x="1657.500" y="1028.500" width="11" height="11" fill="none" stroke="#1a1a90" stroke-width="1.300"/><rect x="1664.500" y="1035.500" width="7" height="7" fill="#c5c5c5" stroke="#000" stroke-width="1.100"/><path d="M1660 1031l4.500 4.500M1660 1031v2.500M1660 1031h2.500" stroke="#000" stroke-width="1" fill="none" stroke-dasharray="1.500 0.800"/></svg>
<div class="a" style="left:1483.500px;top:1027px;width:67.500px;height:19px;background:#e0e0e0;border:1px solid;border-color:#000 #ececec #ececec #000;box-shadow:inset 1px 1px 0 #6a6a6a"></div><div class="t" style="left:1488px;top:1031px;font-size:11px">0</div>
<div class="a" style="left:0;top:1048px;width:1680px;height:2px;background:#3a78dc"></div>
</div>
</body></html>
